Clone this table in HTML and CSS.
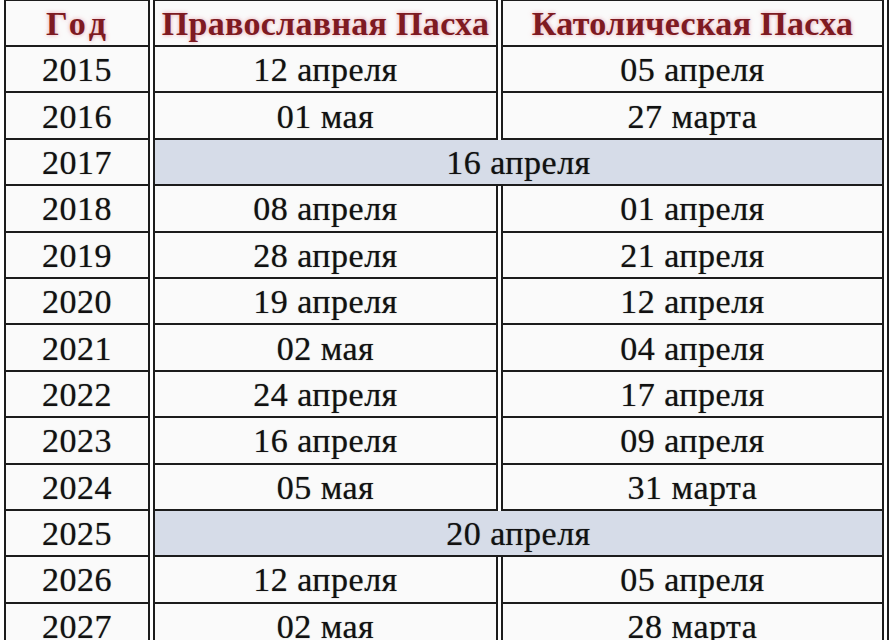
FILE: index.html
```html
<!DOCTYPE html>
<html lang="ru">
<head>
<meta charset="utf-8">
<title>Пасха</title>
<link rel="stylesheet" href="styles.css">
</head>
<body>
<table class="easter">
  <colgroup>
    <col class="c-year">
    <col class="c-orth">
    <col class="c-cath">
  </colgroup>
  <thead>
    <tr class="head">
      <th class="year">Год</th>
      <th>Православная Пасха</th>
      <th>Католическая Пасха</th>
    </tr>
  </thead>
  <tbody>
    <tr><td>2015</td><td>12 апреля</td><td>05 апреля</td></tr>
    <tr><td>2016</td><td>01 мая</td><td>27 марта</td></tr>
    <tr><td>2017</td><td class="same" colspan="2">16 апреля</td></tr>
    <tr><td>2018</td><td>08 апреля</td><td>01 апреля</td></tr>
    <tr><td>2019</td><td>28 апреля</td><td>21 апреля</td></tr>
    <tr><td>2020</td><td>19 апреля</td><td>12 апреля</td></tr>
    <tr><td>2021</td><td>02 мая</td><td>04 апреля</td></tr>
    <tr><td>2022</td><td>24 апреля</td><td>17 апреля</td></tr>
    <tr><td>2023</td><td>16 апреля</td><td>09 апреля</td></tr>
    <tr><td>2024</td><td>05 мая</td><td>31 марта</td></tr>
    <tr><td>2025</td><td class="same" colspan="2">20 апреля</td></tr>
    <tr><td>2026</td><td>12 апреля</td><td>05 апреля</td></tr>
    <tr><td>2027</td><td>02 мая</td><td>28 марта</td></tr>
  </tbody>
</table>
</body>
</html>
```

FILE: styles.css
```css
html, body {
  margin: 0;
  padding: 0;
  background: #ffffff;
  overflow: hidden;
}

.easter {
  margin: -1px 0 0 1px;
  width: 888px;
  table-layout: fixed;
  border-collapse: separate;
  border-spacing: 3px 0;
  border-right: 2px solid #1c1c1c;
  font-family: "Liberation Serif", "Times New Roman", serif;
  color: #111;
}

.c-year { width: 146px; }
.c-orth { width: 345px; }
.c-cath { width: 383px; }

.easter th,
.easter td {
  box-sizing: border-box;
  padding: 0;
  text-align: center;
  vertical-align: middle;
  border-left: 2px solid #1c1c1c;
  border-right: 2px solid #1c1c1c;
  border-bottom: 2px solid #1c1c1c;
  background: #fafafa;
  white-space: nowrap;
}

.head {
  height: 48px;
}

.easter th {
  border-top: 2px solid #1c1c1c;
  font-size: 34px;
  letter-spacing: 0.3px;
  font-weight: bold;
  color: #7e1a22;
  text-shadow: 0 0 4px rgba(220, 100, 120, 0.6);
  padding-top: 2px;
}

.easter th.year {
  letter-spacing: 4px;
  padding-left: 2px;
}

.easter tbody tr {
  height: 46.4px;
}

.easter td {
  font-size: 34px;
  letter-spacing: 0.5px;
  line-height: 1;
  text-shadow: 0 0 1px rgba(0, 0, 0, 0.5);
  padding-top: 2px;
}

.easter td.same {
  background: #d6dce8;
}
```
